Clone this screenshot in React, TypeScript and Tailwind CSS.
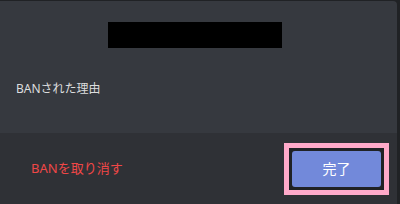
export default function App() {
  return (
    <div
      className="h-[204px] w-[400px] overflow-hidden bg-[#202225] pt-px pr-[3px]"
      style={{ fontFamily: '"Noto Sans", "Noto Sans CJK JP", sans-serif' }}
    >
      <div className="flex h-full flex-col overflow-hidden rounded-tr-[4px] bg-[#36393f]">
        <div className="flex h-[132px] flex-col">
          <div className="flex justify-center pt-[21px] pr-[7px]">
            <div className="h-[26px] w-[174px] bg-black" />
          </div>
          <div className="pl-4 pt-[33px] text-[12px] leading-4 text-[#dcddde]">BANされた理由</div>
        </div>
        <div className="flex flex-1 items-center justify-between bg-[#2f3136] pl-[31px] pr-[8px]">
          <button className="text-[13px] text-[#f04747]">BANを取り消す</button>
          <div className="border-[5px] border-[#ffaaca] bg-[#202225] p-[3px]">
            <button className="flex h-[36px] w-[89px] items-center justify-center rounded-[3px] bg-[#7289da] text-[14px] text-white">
              完了
            </button>
          </div>
        </div>
      </div>
    </div>
  );
}
